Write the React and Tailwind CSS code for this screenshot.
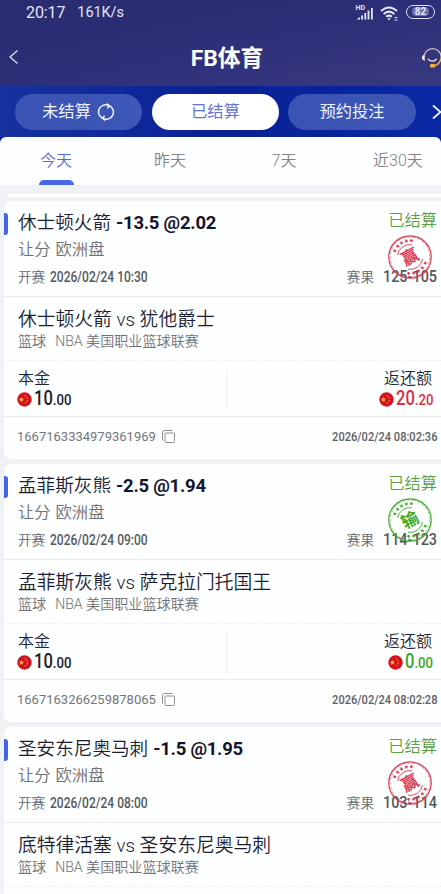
import React, { useState } from "react";

const bets = [
  {
    id: "1667163334979361969",
    pick: "休士顿火箭",
    odds: "-13.5 @2.02",
    start: "2026/02/24 10:30",
    result: "125-105",
    match: "休士顿火箭 vs 犹他爵士",
    won: true,
    payout: ["20", ".20"],
    settled: "2026/02/24 08:02:36",
  },
  {
    id: "1667163266259878065",
    pick: "孟菲斯灰熊",
    odds: "-2.5 @1.94",
    start: "2026/02/24 09:00",
    result: "114-123",
    match: "孟菲斯灰熊 vs 萨克拉门托国王",
    won: false,
    payout: ["0", ".00"],
    settled: "2026/02/24 08:02:28",
  },
  {
    id: "1667163198842509311",
    pick: "圣安东尼奥马刺",
    odds: "-1.5 @1.95",
    start: "2026/02/24 08:00",
    result: "103-114",
    match: "底特律活塞 vs 圣安东尼奥马刺",
    won: true,
  },
];

const days = ["今天", "昨天", "7天", "近30天"];

function StatusBar() {
  return (
    <div className="flex h-[25px] items-center pl-[26px] pr-[6px] text-[#e4e5f6]">
      <span className="text-[16px] tracking-[-0.1px]">20:17</span>
      <span className="ml-[12px] text-[14.5px] tracking-[-0.1px]">161K/s</span>
      <svg className="-mt-[2px] ml-auto" width="20" height="18" viewBox="0 0 20 18" fill="currentColor">
        <text x="0.5" y="7" fontSize="7" fontWeight="700">HD</text>
        <path d="M1.5 16.5l3.5-2.5v2.5zM6.2 12.5h1.8v4h-1.8zM9.4 10h1.8v6.500H9.400zM12.600 7.500h1.800v9h-1.800zM16 5h1.800v11.500H16z" />
      </svg>
      <svg className="ml-[5px]" width="20" height="18" viewBox="0 0 20 18" fill="none" stroke="currentColor" strokeWidth="2">
        <path d="M1 7q8-7 16 0M3.600 10q5.400-4.700 10.800 0M6.200 12.800q2.800-2.400 5.600 0" />
        <path d="M7.200 14.300h3.600L9 16.500z" fill="currentColor" stroke="none" />
        <path d="M14.500 13.500h3M14.500 16h3" strokeWidth="1" />
      </svg>
      <div className="ml-[6px] -mt-[2px] grid h-[14px] w-[29px] shrink-0 place-items-center rounded-full border-[1.5px] border-[#dfe0f2]">
        <span className="rounded-sm bg-[#6d6fa8] px-[3px] text-[10px] font-bold leading-[9px]">82</span>
      </div>
    </div>
  );
}

function Header() {
  return (
    <div className="relative flex h-[61px] items-center justify-between overflow-hidden">
      <svg className="ml-[7px] mt-[3px]" width="13" height="16" viewBox="0 0 13 16" fill="none" stroke="#d5d5ea" strokeWidth="1.4">
        <path d="M10.5 1.5L3 8l7.5 6.5" />
      </svg>
      <h1 className="ml-[14px] mt-[7px] text-[22.8px] font-bold leading-none text-white">FB体育</h1>
      <svg className="-mr-[2px] mt-[3px] shrink-0" width="23" height="24" viewBox="0 0 23 24" fill="none">
        <path d="M4 12.500a8.600 8.600 0 0 1 17.200-.5" stroke="#c9bdb1" strokeWidth="1.300" />
        <path d="M4.300 9.800Q1.500 10.500 2 13.500q.5 2 3 2.200z" fill="#f3edd4" />
        <path d="M21.200 12q0 5.500-5.500 8.500" stroke="#e0b35a" strokeWidth="1.500" />
        <path d="M7.800 14q4.500 4.200 9 0" stroke="#eeeae5" strokeWidth="1.300" />
        <rect x="10" y="19" width="5.500" height="3.400" rx="1" fill="#edae3c" />
      </svg>
    </div>
  );
}

function StateTabs({ state, setState }) {
  const cls = (k) =>
    "flex h-[36px] shrink-0 items-center justify-center rounded-full pt-px text-[16.3px] " +
    (state === k ? "bg-white text-[#6273d6]" : "bg-gradient-to-r from-[#3b53b2] to-[#3c57b7] text-[#f0f3ff]");

  return (
    <div className="flex h-[51px] shrink-0 items-center overflow-hidden bg-gradient-to-r from-[#1631a0] via-[#0a2194] to-[#0828a4] pl-[15px]">
      <button className={cls("open") + " w-[127px]"} onClick={() => setState("open")}>
        未结算
        <svg className="ml-[6px]" width="18" height="18" viewBox="0 0 18 18" fill="none" stroke="currentColor" strokeWidth="1.5">
          <path d="M5.8 15.3A7 7 0 0 1 11.3 2.4M12.2 2.7A7 7 0 0 1 6.700 15.600" />
          <path d="M9.600.7l2.700 1.900-1.900 2.700M8.400 17.300l-2.700-1.900 1.900-2.700" />
        </svg>
      </button>
      <button className={cls("settled") + " ml-[10px] w-[127px]"} onClick={() => setState("settled")}>已结算</button>
      <button className={cls("reserve") + " ml-[9px] w-[128px]"} onClick={() => setState("reserve")}>预约投注</button>
      <svg className="ml-[14px] shrink-0" width="14" height="18" viewBox="0 0 14 18" fill="none" stroke="#eef1ff" strokeWidth="1.9">
        <path d="M3 2.5L10.5 9 3 15.5" />
      </svg>
    </div>
  );
}

function DayTabs({ day, setDay }) {
  return (
    <div className="bg-[#0a219a]">
      <div className="flex h-[48px] rounded-t-[6px] bg-[#fdfefe]">
        {days.map((d, i) => (
          <button
            key={d}
            onClick={() => setDay(i)}
            className={
              "flex w-[114px] shrink-0 flex-col items-center justify-between pt-[12px] text-[16px] font-[350] leading-[24px] " +
              (day === i ? "text-[#5468d8]" : "text-[#848484]") +
              (i === 0 ? " -ml-[1px]" : "")
            }
          >
            {d}
            <span className={"h-[5px] w-[35px] rounded-t-[5px] " + (day === i ? "bg-[#4a66ee]" : "")} />
          </button>
        ))}
      </div>
    </div>
  );
}

function Coin() {
  return (
    <svg className="shrink-0" width="15" height="15" viewBox="0 0 15 15">
      <circle cx="7.500" cy="7.500" r="7.200" fill="#d3121f" />
      <path d="M4.400 5l.8 1.600 1.800.2-1.300 1.200.3 1.800-1.600-.9-1.600.9.300-1.800-1.200-1.200 1.700-.2z" fill="#f3b23b" />
      <circle cx="8.500" cy="4" r=".8" fill="#ec9a35" />
      <circle cx="10.300" cy="6" r=".8" fill="#ec9a35" />
      <circle cx="10.200" cy="8.700" r=".8" fill="#ec9a35" />
      <circle cx="8.400" cy="10.700" r=".8" fill="#ec9a35" />
    </svg>
  );
}

const star = "M0-2.1L.6-.7 2.1-.6.9.4 1.300 1.900 0 1.100-1.300 1.900-.9.400-2.100-.6-.6-.7z";

function Stamp({ won }) {
  const color = won ? "#d93a55" : "#3faa2c";
  return (
    <svg className="absolute right-[8px] top-[33px]" width="46" height="46" viewBox="-23 -23 46 46" fill="none" stroke={color}>
      <circle r="21.200" strokeWidth="1.200" />
      <circle r="19.800" strokeWidth=".5" strokeDasharray="3 2" />
      <path d="M-12.500-2A12.500 12.500 0 0 1 2-12.300M12.500 2A12.500 12.500 0 0 1-2 12.300" strokeWidth=".9" />
      <g fill={color} stroke="none">
        {[-68, -49, -31, -13, 5, 112, 131, 149, 167, 185].map((a) => (
          <path key={a} d={star} transform={`rotate(${a}) translate(0 -16.500)`} />
        ))}
        <text transform="rotate(-28)" textAnchor="middle" y="6" fontSize="17" fontWeight="700">
          {won ? "赢" : "输"}
        </text>
      </g>
    </svg>
  );
}

// digits are set condensed, the negative margin gives back the width lost to the scale
function Amount({ value, className }) {
  const short = value[0].length === 1;
  return (
    <div className={"flex h-[22px] items-center " + className}>
      <Coin />
      <span className={"ml-[2px] mt-px flex origin-left scale-x-[0.85] items-baseline leading-[22px] " + (short ? "-mr-[4px]" : "-mr-[6px]")}>
        <span className="text-[19.5px] font-medium">{value[0]}</span>
        <span className="text-[15.5px] font-medium">{value[1]}</span>
      </span>
    </div>
  );
}

function BetCard({ bet }) {
  return (
    <div className="relative ml-[4px] h-[258px] shrink-0 overflow-hidden rounded-l-[7px] bg-[#fdfefe] font-[350]">
      <div className="absolute left-[-1px] top-[12px] h-[22px] w-[5px] rounded-r-[3px] bg-[#4563ea]" />
      <div className="h-[96px] border-b border-[#e9ebee] pl-[14px] pr-[4px] pt-[11px]">
        <div className="flex h-[24px] items-center justify-between whitespace-nowrap">
          <div className="flex items-center text-[18.6px] text-[#1c1d33]">
            {bet.pick}
            <span className="ml-[5px] text-[18.5px] font-bold tracking-[-0.25px] text-[#14142e]">{bet.odds}</span>
          </div>
          <span className="-mt-[5px] text-[16.3px] text-[#5f9f43]">已结算</span>
        </div>
        <div className="flex h-[29px] items-center text-[16.3px] text-[#6d7076]">
          让分<span className="ml-[5px]">欧洲盘</span>
        </div>
        <div className="flex h-[24px] items-center whitespace-nowrap text-[13.6px] text-[#64686e]">
          开赛
          <span className="ml-[5px] origin-left scale-x-[0.86] text-[14px] font-medium text-[#55595f]">{bet.start}</span>
          <span className="ml-auto">赛果</span>
          <span className="ml-[9px] flex w-[54px] justify-end">
            <span className="origin-right scale-x-[0.9] text-[16px] font-medium text-[#51565d]">{bet.result}</span>
          </span>
        </div>
        <Stamp won={bet.won} />
      </div>

      <div className="h-[64px] border-b border-dashed border-[#edeff1] pl-[14px] pt-[10px]">
        <div className="flex h-[26px] items-center text-[18.8px] text-[#1c1d33]">{bet.match}</div>
        <div className="flex h-[17px] items-center text-[14.1px] text-[#6f7278]">
          篮球<span className="ml-[9px]">NBA 美国职业篮球联赛</span>
        </div>
      </div>

      {bet.payout && (
        <div className="flex h-[56px] border-b border-[#e9ebee] pl-[14px] pr-[7px] pt-[8px]">
          <div className="h-[44px] w-[209px] border-r border-[#f0f1f3] text-[#1f2026]">
            <div className="flex h-[19px] items-center text-[16px] text-[#222333]">本金</div>
            <Amount value={["10", ".00"]} className="-ml-px" />
          </div>
          <div className="ml-auto flex flex-col items-end">
            <div className="mr-[2px] flex h-[19px] items-center text-[16px] text-[#222333]">返还额</div>
            <Amount value={bet.payout} className={Number(bet.payout[0]) > 0 ? "text-[#d6304a]" : "text-[#3fa52c]"} />
          </div>
        </div>
      )}

      {bet.settled && (
        <div className="flex h-[39px] items-center whitespace-nowrap pl-[13px] pr-[4px] text-[13px] text-[#73767b]">
          <span className="font-normal">{bet.id}</span>
          <svg className="ml-[6px]" width="13" height="13" viewBox="0 0 13 13" fill="none" stroke="#8e9196" strokeWidth="1">
            <path d="M.5 10.5v-8q0-2 2-2h8" />
            <rect x="3" y="3" width="9.5" height="9.5" rx="1" />
          </svg>
          <span className="ml-auto origin-right scale-x-[0.82] text-[13.5px] font-medium text-[#5d6167]">{bet.settled}</span>
        </div>
      )}
    </div>
  );
}

export default function App() {
  const [state, setState] = useState("settled");
  const [day, setDay] = useState(0);

  return (
    <div className="flex h-[894px] w-[441px] flex-col overflow-hidden bg-[#eff2f4] font-['Roboto','Noto_Sans_CJK_SC',sans-serif]">
      <div className="bg-gradient-to-br from-[#292c70] via-[#2d2f78] to-[#393981]">
        <StatusBar />
        <Header />
      </div>
      <StateTabs state={state} setState={setState} />
      <DayTabs day={day} setDay={setDay} />
      <div className="ml-[8px] mt-[9px] h-[3px] shrink-0 bg-[#fdfefe]" />
      <div className="mt-[4px] flex flex-col gap-[5px]">
        {bets.map((bet) => (
          <BetCard key={bet.id} bet={bet} />
        ))}
      </div>
    </div>
  );
}
